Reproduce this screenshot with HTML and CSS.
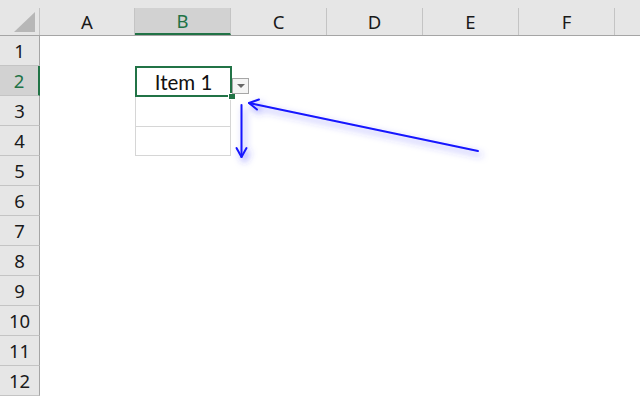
FILE: index.html
```html
<!DOCTYPE html>
<html lang="en">
<head>
    <meta charset="UTF-8">
    <title>Sheet</title>
    <link rel="stylesheet" href="styles.css">
</head>
<body>
    <div class="sheet">
        <div class="head">
            <div class="corner"><span class="tri"></span></div>
            <div class="col col-a">A</div>
            <div class="col sel">B</div>
            <div class="col">C</div>
            <div class="col">D</div>
            <div class="col">E</div>
            <div class="col">F</div>
            <div class="col last"></div>
        </div>

        <div class="row"><div class="rh">1</div></div>
        <div class="row">
            <div class="rh sel">2</div>
            <div class="cell col-a"></div>
            <div class="cell item">Item 1
                <span class="handle"></span>
                <span class="drop"><span class="caret"></span></span>
            </div>
        </div>
        <div class="row">
            <div class="rh">3</div>
            <div class="cell col-a"></div>
            <div class="cell list"></div>
        </div>
        <div class="row">
            <div class="rh">4</div>
            <div class="cell col-a"></div>
            <div class="cell list list-end"></div>
        </div>
        <div class="row"><div class="rh">5</div></div>
        <div class="row"><div class="rh">6</div></div>
        <div class="row"><div class="rh">7</div></div>
        <div class="row"><div class="rh">8</div></div>
        <div class="row"><div class="rh">9</div></div>
        <div class="row"><div class="rh">10</div></div>
        <div class="row"><div class="rh">11</div></div>
        <div class="row"><div class="rh">12</div></div>

        <!-- annotation arrows -->
        <svg class="arrows" width="640" height="397" viewBox="0 0 640 397">
            <defs>
                <filter id="glow" x="-20%" y="-50%" width="140%" height="200%">
                    <feGaussianBlur in="SourceAlpha" stdDeviation="3.5" result="blur"/>
                    <feOffset dx="3" dy="4" result="off"/>
                    <feFlood flood-color="#3c3cff" flood-opacity="0.55"/>
                    <feComposite in2="off" operator="in"/>
                    <feMerge>
                        <feMergeNode/>
                        <feMergeNode in="SourceGraphic"/>
                    </feMerge>
                </filter>
            </defs>
            <g filter="url(#glow)" fill="none" stroke="#1414ff" stroke-width="2" stroke-linecap="round" stroke-linejoin="round">
                <path d="M478 151 L249 103"/>
                <path d="M259 99.5 L249 103 L257 109.5"/>
                <path d="M241.5 105 L241.5 157"/>
                <path d="M236.5 148 L241.5 157 L246.5 148"/>
            </g>
        </svg>
    </div>
</body>
</html>
```

FILE: styles.css
```css
body {
    margin: 0;
    background: #fff;
    font-family: "Noto Sans", "Open Sans", sans-serif;
}
.sheet {
    position: relative;
    width: 640px;
    height: 397px;
    overflow: hidden;
}
.head {
    display: flex;
    height: 36px;
    padding-top: 8px;
    box-sizing: border-box;
    background: #e6e6e6;
    border-bottom: 1px solid #a5a5a5;
}
.corner {
    width: 40px;
    flex: none;
    box-sizing: border-box;
    border-right: 1px solid #c4c4c4;
    display: flex;
    justify-content: flex-end;
    align-items: flex-end;
    padding: 0 4px 3px 0;
}
.tri {
    width: 0;
    height: 0;
    border-left: 21px solid transparent;
    border-bottom: 20px solid #b7b7b7;
}
.col {
    width: 96px;
    flex: none;
    box-sizing: border-box;
    border-right: 1px solid #c4c4c4;
    text-align: center;
    font-size: 18.5px;
    line-height: 28px;
    color: #1a1a1a;
}
.col-a {
    width: 95px;
}
.col.sel {
    background: #d2d2d2;
    color: #217346;
    border-bottom: 2px solid #217346;
    line-height: 26px;
}
.col.last {
    flex: 1;
    border-right: none;
}
.row {
    display: flex;
    height: 30px;
}
.rh {
    width: 40px;
    flex: none;
    box-sizing: border-box;
    background: #e6e6e6;
    border-right: 1px solid #a5a5a5;
    border-bottom: 1px solid #c4c4c4;
    text-align: center;
    font-size: 18.5px;
    line-height: 30px;
    color: #1a1a1a;
}
.rh.sel {
    background: #d2d2d2;
    color: #217346;
    border-right: 2px solid #217346;
}
.cell {
    width: 96px;
    flex: none;
    box-sizing: border-box;
}
.cell.col-a {
    width: 95px;
}
.item {
    position: relative;
    height: 31px;
    box-shadow: inset 0 0 0 2px #217346;
    width: 97px;
    text-align: center;
    font-family: Lato, "Open Sans", sans-serif;
    font-size: 20.5px;
    line-height: 32px;
    color: #111;
    z-index: 1;
}
.handle {
    position: absolute;
    left: 93px;
    top: 27px;
    width: 6px;
    height: 5px;
    background: #217346;
    border: 1px solid #fff;
}
.drop {
    position: absolute;
    left: 97px;
    top: 12px;
    width: 17px;
    height: 16px;
    box-sizing: border-box;
    border: 1px solid #a6a6a6;
    background: #f4f4f4;
    display: flex;
    align-items: center;
    justify-content: center;
}
.caret {
    width: 0;
    height: 0;
    border-left: 4px solid transparent;
    border-right: 4px solid transparent;
    border-top: 4px solid #666;
}
.list {
    border: 1px solid #d6d6d6;
    border-bottom: none;
}
.list-end {
    border-bottom: 1px solid #d6d6d6;
}
.arrows {
    position: absolute;
    left: 0;
    top: 0;
    pointer-events: none;
}
```
